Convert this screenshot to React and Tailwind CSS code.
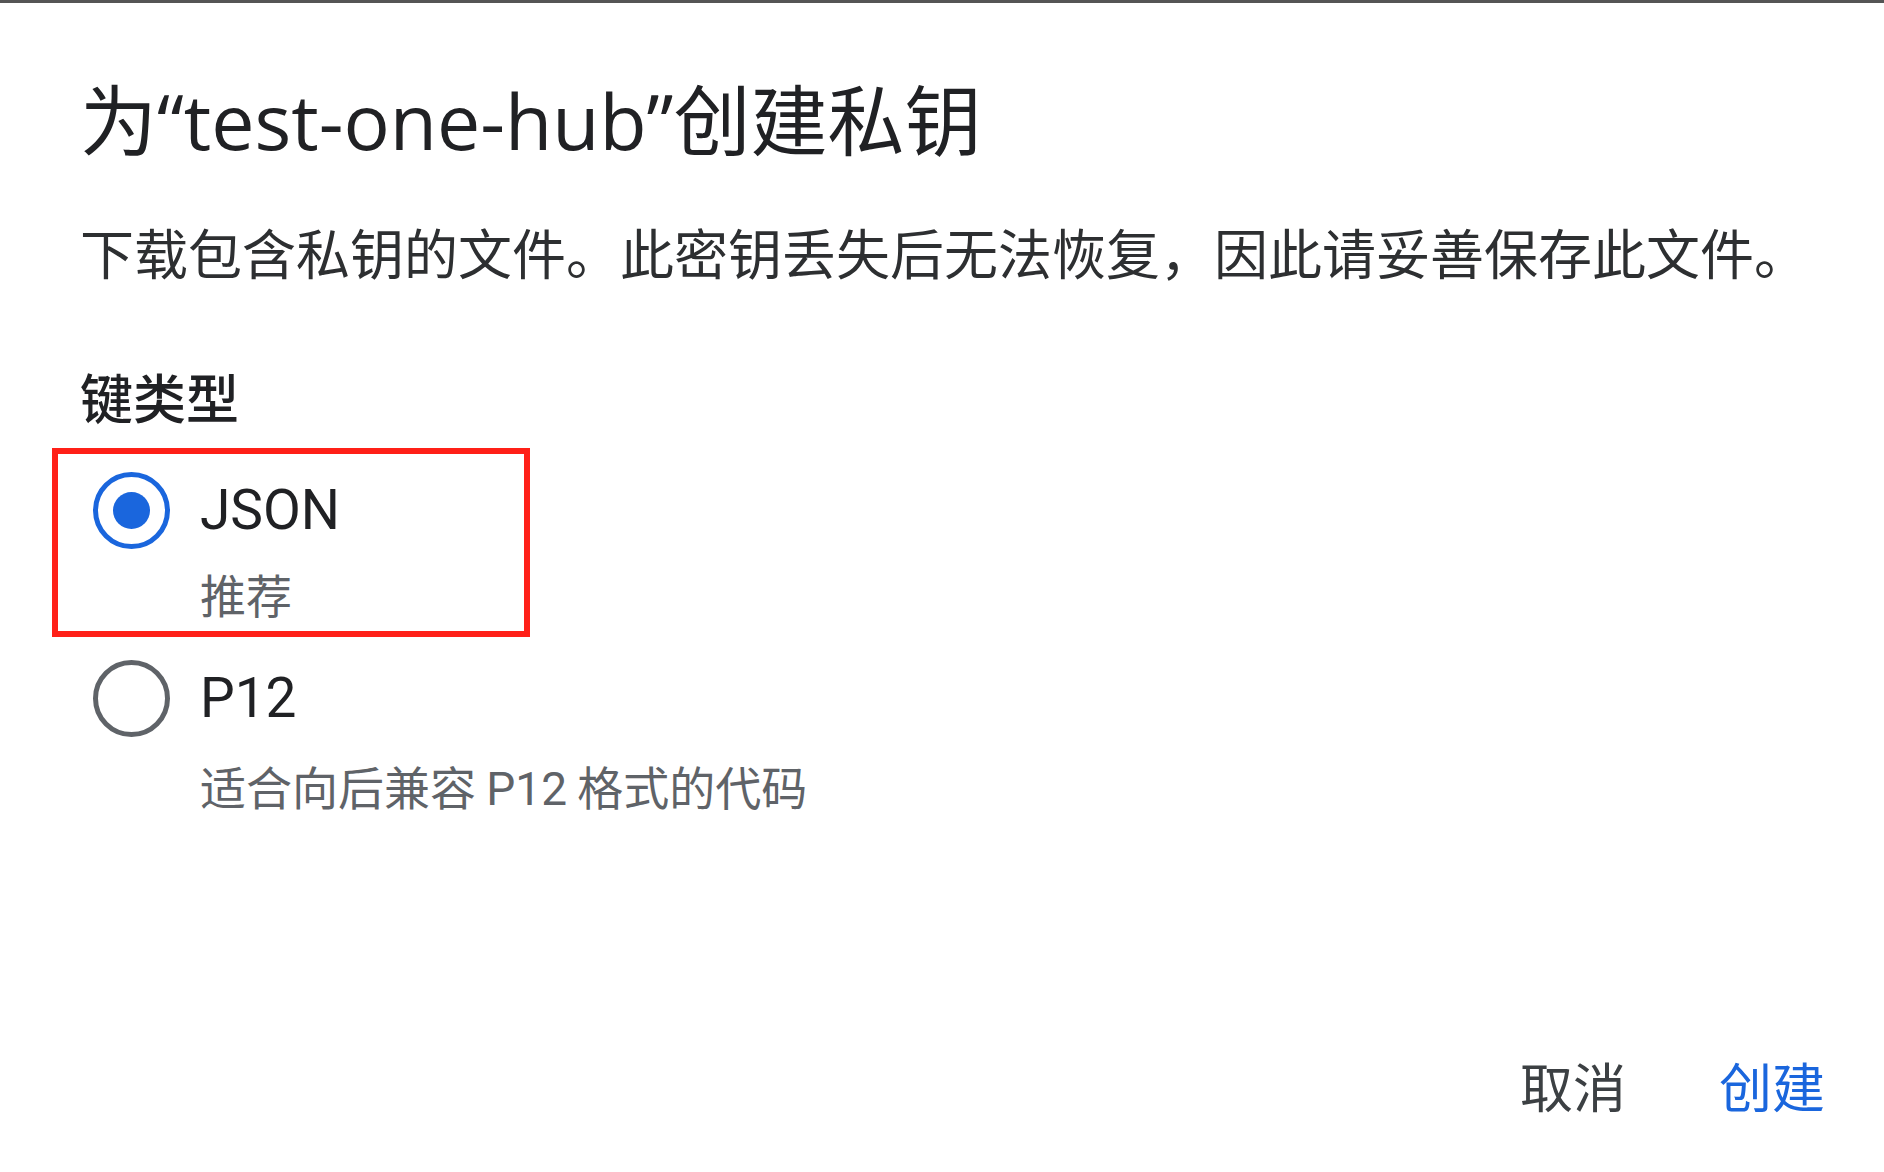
// Private key creation dialog
const sans = { fontFamily: '"Open Sans", "Noto Sans CJK SC", sans-serif' };

const Radio = ({ checked }) => (
  <div
    className={`w-[77px] h-[77px] shrink-0 rounded-full border-[5px] flex items-center justify-center ${checked ? 'border-[#1a66dd]' : 'border-[#5f6368]'}`}
  >
    {checked && <div className="w-[37px] h-[37px] rounded-full bg-[#1a66dd]" />}
  </div>
);

export default function App() {
  return (
    <div className="w-[1884px] h-[1172px] bg-white flex flex-col font-['Noto_Sans_CJK_SC',sans-serif]">
      <div className="h-[3px] bg-[#555555]" />
      <div className="pl-[80px] pr-[59px] flex flex-col flex-1">
        <h1 className="mt-[79px] text-[77px] leading-[77px] text-[#202124] font-normal" style={sans}>
          为“test-one-hub”创建私钥
        </h1>
        <p className="mt-[66px] text-[54px] leading-[54px] text-[#2d2f31]">
          下载包含私钥的文件。此密钥丢失后无法恢复，因此请妥善保存此文件。
        </p>
        <div className="mt-[91px] text-[53px] leading-[53px] font-medium text-[#202124]">键类型</div>

        <div className="mt-[25px] -ml-[28px] w-[478px] border-[6px] border-[#ff2018] pl-[35px] pt-[18px] pb-[15px]">
          <div className="flex items-start gap-[30px]">
            <Radio checked />
            <div className="flex flex-col">
              <span className="text-[55px] leading-[77px] text-[#202124] font-['Roboto',sans-serif]">JSON</span>
              <span className="mt-[21px] text-[46px] leading-[46px] text-[#5f6368]">推荐</span>
            </div>
          </div>
        </div>

        <div className="mt-[23px] ml-[13px] flex items-start gap-[30px]">
          <Radio />
          <div className="flex flex-col">
            <span className="text-[55px] leading-[77px] text-[#202124] font-['Roboto',sans-serif]">P12</span>
            <span className="mt-[25px] text-[46px] leading-[46px] text-[#5f6368]">
              适合向后兼容 <span className="font-['Roboto',sans-serif]">P12</span> 格式的代码
            </span>
          </div>
        </div>

        <div className="mt-[247px] flex justify-end items-center gap-[93px] text-[53px] leading-[53px]">
          <button className="text-[#3c4043]">取消</button>
          <button className="text-[#1a66dd]">创建</button>
        </div>
      </div>
    </div>
  );
}
